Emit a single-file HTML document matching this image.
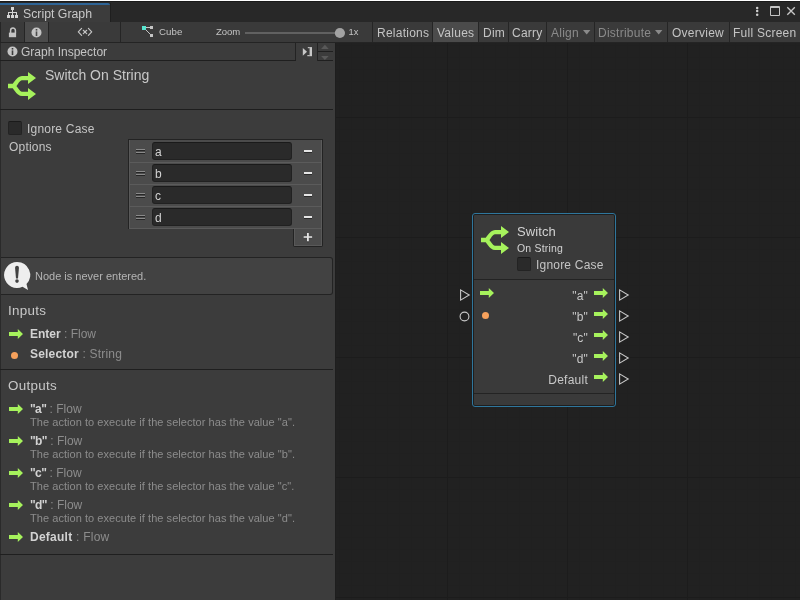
<!DOCTYPE html>
<html><head><meta charset="utf-8">
<style>
*{box-sizing:border-box;margin:0;padding:0}
html,body{width:800px;height:600px;overflow:hidden;background:#212121;font-family:"Liberation Sans",sans-serif;color:#c4c4c4}
.a{position:absolute}
.t{position:absolute;white-space:pre;line-height:1;filter:grayscale(1)}
svg{position:absolute;overflow:visible}
#top{left:0;top:0;width:800px;height:22px;background:#282828;border-top:1px solid #fff}
#top1{left:0;top:1px;width:800px;height:1px;background:#1a1a1a}
#tab{left:0;top:3px;width:110px;height:19px;background:#3c3c3c;border-top:2px solid #2e6496;border-top-right-radius:2px}
#tabr{left:110px;top:3px;width:1px;height:19px;background:#1f1f1f}
#tb{left:0;top:22px;width:800px;height:21px;background:#3a3a3a;border-bottom:1px solid #242424}
.btn{position:absolute;top:22px;height:20px;border-right:1px solid #252525}
.on{background:#4b4b4b}
.bt{font-size:12px;color:#c4c4c4;top:27px;letter-spacing:0.25px}
.dis{color:#8a8a8a}
#insp{left:0;top:43px;width:335px;height:557px;background:#3c3c3c}
.sep{position:absolute;height:1px;background:#1f1f1f}
.lbl{font-size:12px;color:#c4c4c4;letter-spacing:0.2px}
</style></head><body>
<div id="top" class="a"></div>
<div id="top1" class="a"></div>
<div id="tab" class="a"></div>
<div id="tabr" class="a"></div>
<!-- tab icon -->
<svg style="left:0;top:0" width="30" height="22" viewBox="0 0 30 22" fill="#d4d4d4">
 <rect x="11" y="7" width="3" height="3"/><rect x="12" y="10" width="1" height="2"/>
 <rect x="8" y="12" width="9" height="1"/><rect x="8" y="12" width="1" height="3"/><rect x="12" y="12" width="1" height="3"/><rect x="16" y="12" width="1" height="3"/>
 <rect x="7" y="15" width="3" height="3"/><rect x="11" y="15" width="3" height="3"/><rect x="15" y="15" width="3" height="3"/>
</svg>
<div class="t" style="left:23px;top:8px;font-size:12.3px;color:#c8c8c8">Script Graph</div>
<!-- window icons -->
<svg style="left:0;top:0" width="800" height="22" viewBox="0 0 800 22">
 <circle cx="757.2" cy="8.1" r="1.25" fill="#cfcfcf"/><circle cx="757.2" cy="11.1" r="1.25" fill="#cfcfcf"/><circle cx="757.2" cy="14.8" r="1.25" fill="#cfcfcf"/>
 <path d="M787.3 7.3L794.8 14.8M794.8 7.3L787.3 14.8" stroke="#c8c8c8" stroke-width="1.3"/>
</svg>
<div class="a" style="left:770px;top:6px;width:10px;height:10px;border:1px solid #c4c4c4;border-top-width:2px;border-radius:1px"></div>


<!-- toolbar -->
<div id="tb" class="a"></div>
<div class="a" style="left:0;top:22px;width:1px;height:20px;background:#252525"></div>
<div class="btn" style="left:1px;width:24px"></div>
<div class="btn on" style="left:25px;width:24px"></div>
<div class="btn" style="left:49px;width:72px"></div>
<div class="btn" style="left:121px;width:252px"></div>
<!-- lock -->
<svg style="left:0;top:0" width="800" height="50" viewBox="0 0 800 50">
 <path d="M10.6 33V30.5A2.4 2.4 0 0 1 15.4 30.5V33" stroke="#c4c4c4" stroke-width="1.5" fill="none"/>
 <rect x="8.9" y="32.6" width="7.2" height="4.6" fill="#c4c4c4"/>
 <path d="M81.6 28.4L78.3 31.9L81.6 35.4M88.4 28.4L91.7 31.9L88.4 35.4M83.3 30.3L86.7 33.6M86.7 30.3L83.3 33.6" stroke="#c4c4c4" stroke-width="1.2" stroke-linecap="round" stroke-linejoin="round" fill="none"/>
</svg>
<!-- info -->
<svg style="left:31px;top:27px" width="11" height="11" viewBox="0 0 11 11">
 <circle cx="5.5" cy="5.5" r="5" fill="#c4c4c4"/>
 <rect x="4.7" y="2" width="1.6" height="1.6" fill="#4b4b4b"/>
 <rect x="4.7" y="4.4" width="1.6" height="4.6" fill="#4b4b4b"/>
</svg>
<!-- cube icon -->
<svg style="left:141px;top:25px" width="13" height="13" viewBox="0 0 13 13">
 <path d="M2.5 2.5H10.5M2.5 2.5L10.5 10.5" stroke="#c4c4c4" stroke-width="1"/>
 <rect x="1" y="1" width="4" height="4" fill="#58e6d0"/>
 <rect x="9" y="1" width="3" height="3" fill="#c4c4c4"/>
 <rect x="9" y="9" width="3" height="3" fill="#c4c4c4"/>
</svg>
<div class="t" style="left:159px;top:26.5px;font-size:9.7px;color:#c4c4c4;letter-spacing:0.1px">Cube</div>
<div class="t" style="left:216px;top:26.5px;font-size:9.5px;color:#c4c4c4">Zoom</div>
<div class="a" style="left:245px;top:32px;width:95px;height:2px;background:#616161"></div>
<svg style="left:0;top:0" width="400" height="42" viewBox="0 0 400 42"><circle cx="339.9" cy="33" r="5.1" fill="#a2a2a2"/></svg>
<div class="t" style="left:348.5px;top:27px;font-size:9.4px;color:#c4c4c4">1x</div>

<div class="btn" style="left:373px;width:60px"></div>
<div class="btn on" style="left:433px;width:46px"></div>
<div class="btn" style="left:479px;width:30px"></div>
<div class="btn" style="left:509px;width:38px"></div>
<div class="btn" style="left:547px;width:48px"></div>
<div class="btn" style="left:595px;width:73px"></div>
<div class="btn" style="left:668px;width:62px"></div>
<div class="btn" style="left:730px;width:70px;border-right:0"></div>
<div class="t bt" style="left:377px">Relations</div>
<div class="t bt" style="left:437px">Values</div>
<div class="t bt" style="left:483px">Dim</div>
<div class="t bt" style="left:512px">Carry</div>
<div class="t bt dis" style="left:551px">Align</div>
<svg style="left:582.8px;top:30px" width="7.4" height="4.4" viewBox="0 0 8 5" preserveAspectRatio="none"><path d="M0 0H8L4 5Z" fill="#8a8a8a"/></svg>
<div class="t bt dis" style="left:598px">Distribute</div>
<svg style="left:655.2px;top:30px" width="7.4" height="4.4" viewBox="0 0 8 5" preserveAspectRatio="none"><path d="M0 0H8L4 5Z" fill="#8a8a8a"/></svg>
<div class="t bt" style="left:672px">Overview</div>
<div class="t bt" style="left:733px">Full Screen</div>

<!-- inspector -->
<div id="insp" class="a"></div>
<div class="a" style="left:0;top:43px;width:1px;height:557px;background:#2a2a2a"></div>
<!-- header -->
<div class="a" style="left:295px;top:43px;width:1px;height:17px;background:#232323"></div>
<div class="sep" style="left:0;top:60px;width:296px"></div>
<div class="sep" style="left:317px;top:60px;width:16px"></div>
<div class="a" style="left:317px;top:43px;width:1px;height:18px;background:#232323"></div>
<div class="sep" style="left:318px;top:51px;width:15px"></div>
<svg style="left:7px;top:46px" width="11" height="11" viewBox="0 0 11 11">
 <circle cx="5.5" cy="5.5" r="5" fill="#c4c4c4"/>
 <rect x="4.7" y="2" width="1.6" height="1.6" fill="#3c3c3c"/>
 <rect x="4.7" y="4.4" width="1.6" height="4.6" fill="#3c3c3c"/>
</svg>
<div class="t lbl" style="left:21px;top:46px;letter-spacing:0">Graph Inspector</div>
<svg style="left:0;top:0" width="340" height="62" viewBox="0 0 340 62">
 <path d="M302.8 48L307 51.8L302.8 55.7Z" fill="#c8c8c8"/>
 <rect x="309.6" y="47.1" width="2.4" height="9.1" fill="#c8c8c8"/>
 <rect x="307.8" y="47.1" width="2" height="1.1" fill="#c8c8c8"/>
 <rect x="307.3" y="55.1" width="2.5" height="1.1" fill="#c8c8c8"/>
 <path d="M321.1 48.9L324.9 44.7L328.7 48.9Z" fill="#595959"/>
 <path d="M321.1 55.9L328.7 55.9L324.9 60Z" fill="#595959"/>
</svg>
<!-- title -->
<svg style="left:8px;top:72px" width="28" height="28" viewBox="0 0 28 28">
 <path d="M0 14H6M5.7 14C8 11.7 10 6.1 14 6.1H21M5.7 14C8 16.3 10 21.9 14 21.9H21" stroke="#a6f25c" stroke-width="4.3" fill="none"/>
 <path d="M20 0L28 6L20 12Z M20 16L28 22L20 28Z" fill="#a6f25c"/>
</svg>
<div class="t" style="left:45px;top:68px;font-size:14px;color:#c8c8c8">Switch On String</div>
<div class="sep" style="left:0;top:109px;width:333px;background:#1e1e1e"></div>

<!-- ignore case -->
<div class="a" style="left:8px;top:121px;width:14px;height:14px;background:#2a2a2a;border:1px solid #232323;border-top-color:#1a1a1a;border-radius:2px"></div>
<div class="t lbl" style="left:27px;top:123px">Ignore Case</div>
<div class="t lbl" style="left:9px;top:141px">Options</div>

<!-- list -->
<div class="a" style="left:128px;top:139px;width:195px;height:90px;background:#232323"></div>
<div class="a" style="left:129px;top:140px;width:193px;height:88px;background:#5b5b5b"></div>
<div class="a" style="left:129px;top:140px;width:192px;height:22px;background:#4b4b4b;border-left:1px solid #595959"></div>
<div class="a" style="left:129px;top:163px;width:192px;height:21px;background:#4b4b4b;border-left:1px solid #595959"></div>
<div class="a" style="left:129px;top:185px;width:192px;height:21px;background:#4b4b4b;border-left:1px solid #595959"></div>
<div class="a" style="left:129px;top:207px;width:192px;height:21px;background:#4b4b4b;border-left:1px solid #595959"></div>
<!-- plus -->
<div class="a" style="left:293px;top:228px;width:30px;height:19px;background:#232323;border-radius:0 0 2px 2px"></div>
<div class="a" style="left:294px;top:228px;width:28px;height:18px;background:#595959"></div>
<div class="a" style="left:295px;top:229px;width:26px;height:16px;background:#4b4b4b"></div>
<div class="a" style="left:129px;top:228px;width:193px;height:1px;background:#5b5b5b"></div>
<svg style="left:0;top:0" width="330" height="250" viewBox="0 0 330 250"><path d="M303.7 237.1H312.1M307.9 232.9V241.3" stroke="#e4e4e4" stroke-width="1.8"/><path d="M303.7 238H307M308.8 238H312.1M307 242.2H308.8" stroke="#2a2a2a" stroke-width="0.6" opacity="0.6"/></svg>
<div class="a" style="left:136px;top:149px;width:9px;height:2px;background:#8a8a8a;border-bottom:1px solid #262626"></div>
<div class="a" style="left:136px;top:152px;width:9px;height:2px;background:#8a8a8a;border-bottom:1px solid #262626"></div>
<div class="a" style="left:152px;top:142px;width:140px;height:18px;background:#2a2a2a;border:1px solid #212121;border-top-color:#1a1a1a;border-radius:3px"></div>
<div class="t lbl" style="left:155px;top:146px;color:#d2d2d2">a</div>
<div class="a" style="left:304px;top:150px;width:8px;height:2px;background:#e4e4e4;box-shadow:0 1px 0 #2a2a2a"></div>
<div class="a" style="left:136px;top:171px;width:9px;height:2px;background:#8a8a8a;border-bottom:1px solid #262626"></div>
<div class="a" style="left:136px;top:174px;width:9px;height:2px;background:#8a8a8a;border-bottom:1px solid #262626"></div>
<div class="a" style="left:152px;top:164px;width:140px;height:18px;background:#2a2a2a;border:1px solid #212121;border-top-color:#1a1a1a;border-radius:3px"></div>
<div class="t lbl" style="left:155px;top:168px;color:#d2d2d2">b</div>
<div class="a" style="left:304px;top:172px;width:8px;height:2px;background:#e4e4e4;box-shadow:0 1px 0 #2a2a2a"></div>
<div class="a" style="left:136px;top:193px;width:9px;height:2px;background:#8a8a8a;border-bottom:1px solid #262626"></div>
<div class="a" style="left:136px;top:196px;width:9px;height:2px;background:#8a8a8a;border-bottom:1px solid #262626"></div>
<div class="a" style="left:152px;top:186px;width:140px;height:18px;background:#2a2a2a;border:1px solid #212121;border-top-color:#1a1a1a;border-radius:3px"></div>
<div class="t lbl" style="left:155px;top:190px;color:#d2d2d2">c</div>
<div class="a" style="left:304px;top:194px;width:8px;height:2px;background:#e4e4e4;box-shadow:0 1px 0 #2a2a2a"></div>
<div class="a" style="left:136px;top:215px;width:9px;height:2px;background:#8a8a8a;border-bottom:1px solid #262626"></div>
<div class="a" style="left:136px;top:218px;width:9px;height:2px;background:#8a8a8a;border-bottom:1px solid #262626"></div>
<div class="a" style="left:152px;top:208px;width:140px;height:18px;background:#2a2a2a;border:1px solid #212121;border-top-color:#1a1a1a;border-radius:3px"></div>
<div class="t lbl" style="left:155px;top:212px;color:#d2d2d2">d</div>
<div class="a" style="left:304px;top:216px;width:8px;height:2px;background:#e4e4e4;box-shadow:0 1px 0 #2a2a2a"></div>

<!-- help box -->
<div class="a" style="left:1px;top:257px;width:332px;height:38px;background:#424242;border:1px solid #232323;border-left:0;border-radius:0 3px 3px 0"></div>
<svg style="left:4px;top:262px" width="28" height="29" viewBox="0 0 28 29">
 <path d="M13 0A13 13 0 1 0 18.5 24.8L24 28L22.5 22A13 13 0 0 0 13 0Z" fill="#eeeeee"/>
 <path d="M11.05 5.7A1.95 1.95 0 0 1 14.95 5.7L14 16.6H12Z" fill="#424242"/>
 <circle cx="13" cy="19.1" r="1.8" fill="#424242"/>
</svg>
<div class="t" style="left:35px;top:271px;font-size:11px;color:#b4b4b4">Node is never entered.</div>

<!-- inputs -->
<div class="t" style="left:8px;top:304px;font-size:13.4px;color:#c8c8c8;letter-spacing:0.3px">Inputs</div>
<svg style="left:9px;top:329px" width="14" height="10" viewBox="0 0 14 10"><path d="M0 3H8.8V0L14 5L8.8 10V7H0Z" fill="#a6f25c"/></svg>
<div class="t" style="left:30px;top:328px;font-size:12px;font-weight:bold;color:#d2d2d2">Enter<span style="font-weight:normal;color:#8c8c8c"> : Flow</span></div>
<div class="a" style="left:11px;top:352px;width:7px;height:7px;border-radius:50%;background:#f6a15c"></div>
<div class="t" style="left:30px;top:348px;font-size:12px;font-weight:bold;color:#d2d2d2;letter-spacing:0.2px">Selector<span style="font-weight:normal;color:#8c8c8c"> : String</span></div>
<div class="sep" style="left:0;top:369px;width:333px"></div>
<div class="t" style="left:8px;top:379px;font-size:13.4px;color:#c8c8c8;letter-spacing:0.3px">Outputs</div>
<svg style="left:9px;top:404px" width="14" height="10" viewBox="0 0 14 10"><path d="M0 3H8.8V0L14 5L8.8 10V7H0Z" fill="#a6f25c"/></svg>
<div class="t" style="left:30px;top:403px;font-size:12px;font-weight:bold;color:#d2d2d2"><span style="letter-spacing:-0.6px">"a"</span><span style="font-weight:normal;color:#8c8c8c"> : Flow</span></div>
<div class="t" style="left:30px;top:417px;font-size:11px;color:#8c8c8c;letter-spacing:0.05px">The action to execute if the selector has the value "a".</div>
<svg style="left:9px;top:436px" width="14" height="10" viewBox="0 0 14 10"><path d="M0 3H8.8V0L14 5L8.8 10V7H0Z" fill="#a6f25c"/></svg>
<div class="t" style="left:30px;top:435px;font-size:12px;font-weight:bold;color:#d2d2d2"><span style="letter-spacing:-0.6px">"b"</span><span style="font-weight:normal;color:#8c8c8c"> : Flow</span></div>
<div class="t" style="left:30px;top:449px;font-size:11px;color:#8c8c8c;letter-spacing:0.05px">The action to execute if the selector has the value "b".</div>
<svg style="left:9px;top:468px" width="14" height="10" viewBox="0 0 14 10"><path d="M0 3H8.8V0L14 5L8.8 10V7H0Z" fill="#a6f25c"/></svg>
<div class="t" style="left:30px;top:467px;font-size:12px;font-weight:bold;color:#d2d2d2"><span style="letter-spacing:-0.6px">"c"</span><span style="font-weight:normal;color:#8c8c8c"> : Flow</span></div>
<div class="t" style="left:30px;top:481px;font-size:11px;color:#8c8c8c;letter-spacing:0.05px">The action to execute if the selector has the value "c".</div>
<svg style="left:9px;top:500px" width="14" height="10" viewBox="0 0 14 10"><path d="M0 3H8.8V0L14 5L8.8 10V7H0Z" fill="#a6f25c"/></svg>
<div class="t" style="left:30px;top:499px;font-size:12px;font-weight:bold;color:#d2d2d2"><span style="letter-spacing:-0.6px">"d"</span><span style="font-weight:normal;color:#8c8c8c"> : Flow</span></div>
<div class="t" style="left:30px;top:513px;font-size:11px;color:#8c8c8c;letter-spacing:0.05px">The action to execute if the selector has the value "d".</div>
<svg style="left:9px;top:532px" width="14" height="10" viewBox="0 0 14 10"><path d="M0 3H8.8V0L14 5L8.8 10V7H0Z" fill="#a6f25c"/></svg>
<div class="t" style="left:30px;top:531px;font-size:12px;font-weight:bold;color:#d2d2d2;letter-spacing:0.25px">Default<span style="font-weight:normal;color:#8c8c8c"> : Flow</span></div>
<div class="sep" style="left:0;top:554px;width:333px"></div>

<!-- graph -->
<div class="a" id="graph" style="left:335px;top:43px;width:465px;height:557px;background-color:#212121;
background-image:
linear-gradient(90deg, #1c1c1c 1px, transparent 1px),
linear-gradient(180deg, #1c1c1c 1px, transparent 1px),
linear-gradient(90deg, #202020 1px, transparent 1px),
linear-gradient(180deg, #202020 1px, transparent 1px);
background-size:120px 120px,120px 120px,12px 12px,12px 12px;
background-position:112px 0,0 74px,4px 0,0 2px"></div>
<div class="a" style="left:335px;top:43px;width:1px;height:557px;background:#1e1e1e"></div>

<!-- node -->
<div class="a" style="left:472px;top:213px;width:144px;height:194px;border:1px solid #2f769c;border-radius:3px;background:#1e1e1e"></div>
<div class="a" style="left:474px;top:215px;width:140px;height:190px;background:#3a3a3a;border-radius:1px"></div>
<div class="a" style="left:474px;top:279px;width:140px;height:1px;background:#232323"></div>
<div class="a" style="left:474px;top:393px;width:140px;height:1px;background:#232323"></div>
<svg style="left:481px;top:226px" width="28" height="28" viewBox="0 0 28 28">
 <path d="M0 14H6M5.7 14C8 11.7 10 6.1 14 6.1H21M5.7 14C8 16.3 10 21.9 14 21.9H21" stroke="#a6f25c" stroke-width="4.3" fill="none"/>
 <path d="M20 0L28 6L20 12Z M20 16L28 22L20 28Z" fill="#a6f25c"/>
</svg>
<div class="t" style="left:517px;top:225px;font-size:13px;color:#d2d2d2;letter-spacing:0.1px">Switch</div>
<div class="t" style="left:517px;top:243px;font-size:10.5px;color:#d2d2d2;letter-spacing:0.2px">On String</div>
<div class="a" style="left:517px;top:257px;width:14px;height:14px;background:#2a2a2a;border:1px solid #232323;border-top-color:#1a1a1a;border-radius:2px"></div>
<div class="t lbl" style="left:536px;top:259px">Ignore Case</div>
<svg style="left:459.5px;top:289px" width="10" height="12" viewBox="0 0 10 12"><path d="M0.6 0.9L9.2 6L0.6 11.1Z" stroke="#c8c8c8" stroke-width="1.1" fill="none"/></svg>
<svg style="left:480px;top:288px" width="14" height="10" viewBox="0 0 14 10"><path d="M0 3H8.8V0L14 5L8.8 10V7H0Z" fill="#a6f25c"/></svg>
<svg style="left:459px;top:311px" width="11" height="11" viewBox="0 0 11 11"><circle cx="5.5" cy="5.5" r="4.4" stroke="#c8c8c8" stroke-width="1.1" fill="none"/></svg>
<div class="a" style="left:482px;top:312px;width:7px;height:7px;border-radius:50%;background:#f6a15c"></div>
<svg style="left:594px;top:288px" width="14" height="10" viewBox="0 0 14 10"><path d="M0 3H8.8V0L14 5L8.8 10V7H0Z" fill="#a6f25c"/></svg>
<svg style="left:619px;top:289px" width="10" height="12" viewBox="0 0 10 12"><path d="M0.6 0.9L9.2 6L0.6 11.1Z" stroke="#c8c8c8" stroke-width="1.1" fill="none"/></svg>
<div class="t lbl" style="right:212px;top:290px;color:#c8c8c8">"a"</div>
<svg style="left:594px;top:309px" width="14" height="10" viewBox="0 0 14 10"><path d="M0 3H8.8V0L14 5L8.8 10V7H0Z" fill="#a6f25c"/></svg>
<svg style="left:619px;top:310px" width="10" height="12" viewBox="0 0 10 12"><path d="M0.6 0.9L9.2 6L0.6 11.1Z" stroke="#c8c8c8" stroke-width="1.1" fill="none"/></svg>
<div class="t lbl" style="right:212px;top:311px;color:#c8c8c8">"b"</div>
<svg style="left:594px;top:330px" width="14" height="10" viewBox="0 0 14 10"><path d="M0 3H8.8V0L14 5L8.8 10V7H0Z" fill="#a6f25c"/></svg>
<svg style="left:619px;top:331px" width="10" height="12" viewBox="0 0 10 12"><path d="M0.6 0.9L9.2 6L0.6 11.1Z" stroke="#c8c8c8" stroke-width="1.1" fill="none"/></svg>
<div class="t lbl" style="right:212px;top:332px;color:#c8c8c8">"c"</div>
<svg style="left:594px;top:351px" width="14" height="10" viewBox="0 0 14 10"><path d="M0 3H8.8V0L14 5L8.8 10V7H0Z" fill="#a6f25c"/></svg>
<svg style="left:619px;top:352px" width="10" height="12" viewBox="0 0 10 12"><path d="M0.6 0.9L9.2 6L0.6 11.1Z" stroke="#c8c8c8" stroke-width="1.1" fill="none"/></svg>
<div class="t lbl" style="right:212px;top:353px;color:#c8c8c8">"d"</div>
<svg style="left:594px;top:372px" width="14" height="10" viewBox="0 0 14 10"><path d="M0 3H8.8V0L14 5L8.8 10V7H0Z" fill="#a6f25c"/></svg>
<svg style="left:619px;top:373px" width="10" height="12" viewBox="0 0 10 12"><path d="M0.6 0.9L9.2 6L0.6 11.1Z" stroke="#c8c8c8" stroke-width="1.1" fill="none"/></svg>
<div class="t lbl" style="right:212px;top:374px;color:#c8c8c8;letter-spacing:0.25px">Default</div>
</body></html>
